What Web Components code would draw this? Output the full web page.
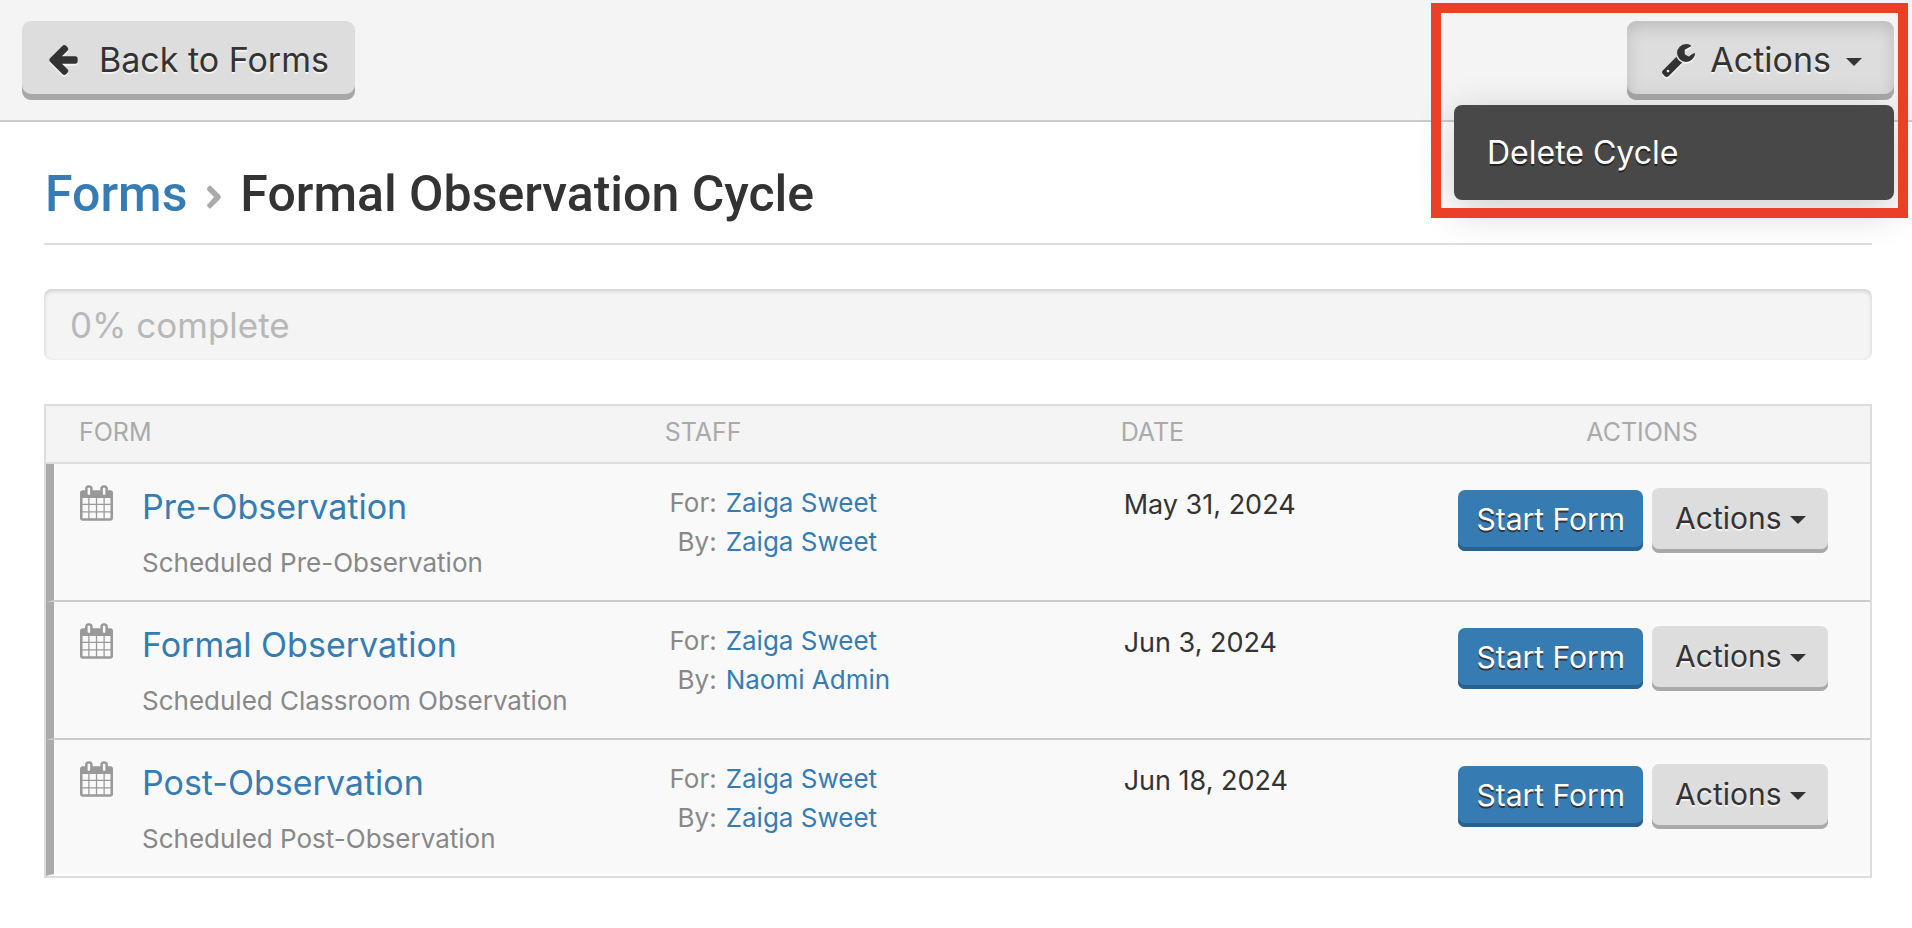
<!DOCTYPE html>
<html lang="en">
<head>
<meta charset="utf-8">
<meta name="viewport" content="width=device-width, initial-scale=1">
<title>Formal Observation Cycle</title>
<style>
  body {
    margin: 0;
    background: #fff;
    color: #333;
    font-family: Inter, "Liberation Sans", sans-serif;
    --link: #367cb3;
    --ink: #333;
    --line: #ddd;
  }
</style>
</head>
<body>
<form-page></form-page>

<script>
const define = (name, html, setup) => {
  const template = document.createElement('template');
  template.innerHTML = html;
  customElements.define(name, class extends HTMLElement {
    constructor() {
      super();
      this.attachShadow({ mode: 'open' }).append(template.content.cloneNode(true));
    }
    connectedCallback() {
      if (setup) setup(this, this.shadowRoot);
    }
  });
};

const ICONS = {
  back: ['192 180 1472 1560', 29, 30, 'M1664 896v128q0 53-32.5 90.5t-84.5 37.5h-704l293 294q38 36 38 90t-38 90l-75 76q-37 37-90 37-52 0-91-37l-651-652q-37-37-37-90 0-52 37-91l651-650q38-38 91-38 52 0 90 38l75 74q38 38 38 91t-38 91l-293 293h704q52 0 84.5 37.5t32.5 90.5z'],
  wrench: ['85 128 1641 1643', 33, 33, 'M448 1472q0-26-19-45t-45-19-45 19-19 45 19 45 45 19 45-19 19-45zm644-420l-682 682q-37 37-90 37-52 0-91-37l-106-108q-38-36-38-90 0-53 38-91l681-681q39 98 114.5 173.5t173.5 114.5zm634-435q0 39-23 106-47 134-164.5 217.5t-258.5 83.5q-185 0-316.5-131.5t-131.5-316.5 131.5-316.5 316.5-131.5q58 0 121.5 16.5t107.5 46.5q16 11 16 28t-16 28l-293 169v224l193 107q5-3 79-48.5t135.5-81 70.5-35.5q15 0 23.5 10t8.5 25z'],
  calendar: ['64 0 1664 1792', 33, 36, 'M192 1664h288v-288h-288v288zm352 0h320v-288h-320v288zm-352-352h288v-320h-288v320zm352 0h320v-320h-320v320zm-352-384h288v-288h-288v288zm736 736h320v-288h-320v288zm-384-736h320v-288h-320v288zm768 736h288v-288h-288v288zm-384-352h320v-320h-320v320zm-352-864v-288q0-13-9.5-22.5t-22.5-9.5h-64q-13 0-22.5 9.5t-9.5 22.5v288q0 13 9.5 22.5t22.5 9.5h64q13 0 22.5-9.5t9.5-22.5zm736 864h288v-320h-288v320zm-384-384h320v-288h-320v288zm384 0h288v-288h-288v288zm32-480v-288q0-13-9.5-22.5t-22.5-9.5h-64q-13 0-22.5 9.5t-9.5 22.5v288q0 13 9.5 22.5t22.5 9.5h64q13 0 22.5-9.5t9.5-22.5zm384-64v1280q0 52-38 90t-90 38h-1408q-52 0-90-38t-38-90v-1280q0-52 38-90t90-38h128v-96q0-66 47-113t113-47h64q66 0 113 47t47 113v96h384v-96q0-66 47-113t113-47h64q66 0 113 47t47 113v96h128q52 0 90 38t38 90z'],
  chevron: ['0 0 15 24', 15, 24, 'M1 4Q1 3 2 2L3 1Q4 0 5 1L14 10Q15.500 12 14 14L5 23Q4 24 3 23L2 22Q0 20 2 19L8 12L2 6Q1 5 1 4z'],
  caret: ['0 0 16 8', 16, 8, 'M0 0h16L8 8z']
};

/* A single glyph, coloured by the surrounding text. */
define('ui-icon', `
  <style>
    :host { display: inline-flex; flex: none; }
    svg { display: block; fill: currentColor; }
  </style>
  <svg aria-hidden="true"><path/></svg>
`, (host, root) => {
  const [box, w, h, d] = ICONS[host.getAttribute('name')];
  const svg = root.querySelector('svg');
  svg.setAttribute('viewBox', box);
  svg.setAttribute('width', w);
  svg.setAttribute('height', h);
  svg.firstElementChild.setAttribute('d', d);
});

/* Raised button: size="large" for the toolbar, tone="primary" for the main action. */
define('ui-button', `
  <style>
    :host { display: inline-block; flex: none; }
    button {
      display: flex; align-items: center; gap: 8px;
      margin: 0; border: 0; border-radius: 7px;
      padding: 0 22px 5px 23px;
      background: #ddd; color: var(--ink);
      font: inherit; font-size: 30px; line-height: 60px; white-space: nowrap;
      text-shadow: 0 2px 0 #f4f4f4;
      box-shadow: inset 0 -4px 0 #a9a9a9;
      cursor: pointer;
    }
    :host([tone="primary"]) button {
      padding: 0 18px 3px; line-height: 58px;
      background: var(--link); color: #fff;
      text-shadow: 0 2px 0 #333;
      box-shadow: inset 0 -4px 0 #2a628f;
    }
    :host([size="large"]) button {
      gap: 15px; padding: 0 32px 1px 35px; border-radius: 9px;
      font-size: 34px; line-height: 78px;
      box-shadow: inset 0 -6px 0 #a8a8a8;
    }
    :host([wide-gap]) button { gap: 21px; padding: 0 26px 1px 27px; }
    :host([pressed]) button {
      box-shadow: inset 0 -6px 0 #a8a8a8, inset 0 6px 16px rgba(0, 0, 0, .15);
    }
    ::slotted(ui-icon) { filter: drop-shadow(0 2px 0 #f4f4f4); }
    ::slotted(ui-icon[name="caret"]) { margin-top: 4px; filter: none; }
  </style>
  <button type="button"><slot></slot></button>
`);

define('action-menu', `
  <style>
    :host { display: block; position: relative; }
    ul {
      position: absolute; top: calc(100% + 5px); right: 0; z-index: 1;
      box-sizing: border-box; width: 440px;
      margin: 0; padding: 28px 33px; list-style: none;
      border-radius: 8px; background: #484848;
      box-shadow: 0 10px 40px rgba(0, 0, 0, .2);
    }
    a {
      display: block; color: #fff; text-decoration: none;
      font-size: 32px; line-height: 39px; text-shadow: 0 2px 0 #222;
    }
    .marker {
      position: absolute; top: -18px; right: -14px; z-index: 2;
      box-sizing: border-box; width: 477px; height: 215px;
      border: 10px solid #eb4027; pointer-events: none;
    }
  </style>
  <ui-button size="large" pressed><ui-icon name="wrench"></ui-icon>Actions<ui-icon name="caret"></ui-icon></ui-button>
  <ul><li><a href="#delete">Delete Cycle</a></li></ul>
  <div class="marker"></div>
`);

define('page-toolbar', `
  <style>
    :host {
      display: flex; justify-content: space-between; align-items: flex-start;
      padding: 21px 18px 20px 22px;
      border-bottom: 2px solid #ccc; background: #f4f4f4;
    }
  </style>
  <slot></slot>
`);

define('page-trail', `
  <style>
    :host { display: block; border-bottom: 2px solid var(--line); padding: 42px 0 19px 1px; }
    h1 {
      display: flex; align-items: center; gap: 19px; margin: 0;
      font: 500 50px/60px Roboto, "Liberation Sans", sans-serif;
    }
    a { color: var(--link); text-decoration: none; }
    ui-icon { color: #aaa; padding-top: 5px; }
  </style>
  <h1><a href="#forms">Forms</a><ui-icon name="chevron"></ui-icon><span><slot></slot></span></h1>
`);

define('progress-strip', `
  <style>
    :host {
      display: block; border-radius: 8px; padding: 2px 26px 1px;
      background: #f4f4f4; color: #b8b8b8;
      font-size: 35px; line-height: 68px;
      box-shadow: inset 0 2px 4px rgba(0, 0, 0, .16);
    }
  </style>
  <div role="progressbar" aria-valuenow="0" aria-valuemin="0" aria-valuemax="100"><slot></slot></div>
`);

define('staff-pair', `
  <style>
    :host { display: block; }
    dl { display: grid; grid-template-columns: 51px 1fr; column-gap: 9px; margin: 0; line-height: 39px; }
    dt { text-align: right; color: #888; }
    dd { margin: 0; }
    a { color: var(--link); text-decoration: none; }
  </style>
  <dl>
    <dt>For:</dt><dd><a href="#staff" class="for"></a></dd>
    <dt>By:</dt><dd><a href="#staff" class="by"></a></dd>
  </dl>
`, (host, root) => {
  root.querySelector('.for').textContent = host.getAttribute('for-name');
  root.querySelector('.by').textContent = host.getAttribute('by-name');
});

const FORMS = [
  ['Pre-Observation', 'Scheduled Pre-Observation', 'Zaiga Sweet', 'Zaiga Sweet', 'May 31, 2024'],
  ['Formal Observation', 'Scheduled Classroom Observation', 'Zaiga Sweet', 'Naomi Admin', 'Jun 3, 2024'],
  ['Post-Observation', 'Scheduled Post-Observation', 'Zaiga Sweet', 'Zaiga Sweet', 'Jun 18, 2024']
];

define('cycle-table', `
  <style>
    :host { display: block; border: 2px solid var(--line); }
    table { width: 100%; table-layout: fixed; border-collapse: separate; border-spacing: 0; }
    .form { width: 32%; }
    .staff, .actions { width: 25%; }
    .date { width: 18%; }
    th {
      box-sizing: border-box; padding: 8px 0 12px 35px;
      border-bottom: 2px solid var(--line);
      background: #f4f4f4; color: #aaa;
      font-size: 25px; line-height: 36px; font-weight: 400; text-align: left;
    }
    th.form { padding-left: 33px; }
    th.actions { padding-left: 0; text-align: center; }
    td {
      padding: 19px 0 0 36px; border-bottom: 2px solid #ccc;
      background: #f9f9f9; font-size: 26px; line-height: 39px; vertical-align: top;
    }
    td:first-child { padding: 18px 0 19px 26px; border-left: 8px solid #aaa; }
    td:nth-child(3) { padding: 21px 0 0 38px; font-size: 27px; }
    td:last-child { padding: 24px 0 0 2px; }
    tr:last-child td { border-bottom-color: #fff; }
    tr:last-child td:first-child { padding-bottom: 17px; }
    .entry { display: flex; gap: 29px; color: #888; }
    .entry ui-icon { padding-top: 3px; color: #999; }
    .title { display: block; color: var(--link); text-decoration: none; font-size: 34px; line-height: 50px; }
    p { margin: 13px 0 0; line-height: 36px; }
    .buttons { display: flex; justify-content: center; align-items: center; gap: 9px; }
  </style>
  <table>
    <thead>
      <tr><th class="form">FORM</th><th class="staff">STAFF</th><th class="date">DATE</th><th class="actions">ACTIONS</th></tr>
    </thead>
    <tbody></tbody>
  </table>
`, (host, root) => {
  root.querySelector('tbody').innerHTML = FORMS.map(([title, note, forName, byName, date]) => `
    <tr>
      <td><div class="entry"><ui-icon name="calendar"></ui-icon><div><a class="title" href="#form">${title}</a><p>${note}</p></div></div></td>
      <td><staff-pair for-name="${forName}" by-name="${byName}"></staff-pair></td>
      <td>${date}</td>
      <td><div class="buttons"><ui-button tone="primary">Start Form</ui-button><ui-button>Actions<ui-icon name="caret"></ui-icon></ui-button></div></td>
    </tr>`).join('');
});

define('form-page', `
  <style>
    :host { display: block; }
    main { display: flex; flex-direction: column; gap: 44px; padding: 0 40px 48px 44px; }
  </style>
  <page-toolbar>
    <ui-button size="large" wide-gap><ui-icon name="back"></ui-icon>Back to Forms</ui-button>
    <action-menu></action-menu>
  </page-toolbar>
  <main>
    <page-trail>Formal Observation Cycle</page-trail>
    <progress-strip>0% complete</progress-strip>
    <cycle-table></cycle-table>
  </main>
`);
</script>
</body>
</html>
